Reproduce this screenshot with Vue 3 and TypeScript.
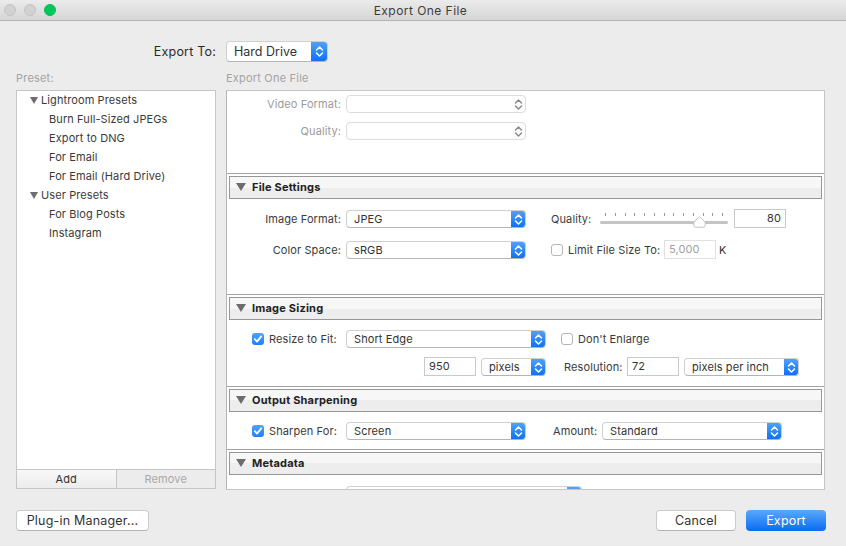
<script setup lang="ts">
const ticks: number[] = Array.from({ length: 13 }, (_, i) => i)
</script>

<template>
  <div class="window">
    <svg class="sprite" width="0" height="0" aria-hidden="true">
      <symbol id="chev" viewBox="0 0 9 13">
        <path d="M1.5 5 4.5 2 7.5 5M1.5 8 4.5 11 7.5 8" fill="none" stroke-width="1.5" stroke-linecap="round" stroke-linejoin="round" />
      </symbol>
      <symbol id="tick" viewBox="0 0 12 12">
        <path d="M2.8 6.2 5 8.6 9.2 3.4" fill="none" stroke="#fff" stroke-width="1.8" stroke-linecap="round" stroke-linejoin="round" />
      </symbol>
    </svg>

    <header class="titlebar">
      <div class="lights">
        <span class="light"></span>
        <span class="light"></span>
        <span class="light green"></span>
      </div>
      <span class="title">Export One File</span>
    </header>

    <main class="content">
      <div class="export-label">Export To:</div>
      <div class="sel big w102">
        <span class="val">Hard Drive</span>
        <span class="stepper"><svg><use href="#chev" /></svg></span>
      </div>

      <div class="caption">Preset:</div>
      <div class="caption">Export One File</div>

      <aside class="presets">
        <ul class="tree">
          <li class="group"><i class="tri small"></i>Lightroom Presets</li>
          <li>Burn Full-Sized JPEGs</li>
          <li>Export to DNG</li>
          <li>For Email</li>
          <li>For Email (Hard Drive)</li>
          <li class="group"><i class="tri small"></i>User Presets</li>
          <li>For Blog Posts</li>
          <li>Instagram</li>
        </ul>
        <div class="tree-actions">
          <div class="tree-btn">Add</div>
          <div class="tree-btn off">Remove</div>
        </div>
      </aside>

      <section class="panel">
        <div class="sec sec-video">
          <div class="row r-video">
            <label class="lab lab-main off">Video Format:</label>
            <div class="sel w180 disabled"><span class="val"></span><span class="stepper"><svg><use href="#chev" /></svg></span></div>
          </div>
          <div class="row r-video2">
            <label class="lab lab-main off">Quality:</label>
            <div class="sel w180 disabled"><span class="val"></span><span class="stepper"><svg><use href="#chev" /></svg></span></div>
          </div>
        </div>

        <div class="sec sec-file">
          <div class="sec-head"><i class="tri"></i>File Settings</div>
          <div class="row r-file1">
            <label class="lab lab-main">Image Format:</label>
            <div class="sel w180"><span class="val">JPEG</span><span class="stepper"><svg><use href="#chev" /></svg></span></div>
            <label class="lab lab-q">Quality:</label>
            <div class="slider">
              <div class="ticks"><span v-for="t in ticks" :key="t" class="mark"></span></div>
              <div class="track"></div>
              <svg class="thumb" viewBox="0 0 14 13"><path d="M7 .8 13.2 6.6V10a2.2 2.2 0 0 1-2.2 2.2H3A2.2 2.2 0 0 1 .8 10V6.6Z" fill="#fff" stroke="#bdbdbd" /></svg>
            </div>
            <div class="input right">80</div>
          </div>
          <div class="row r-file2">
            <label class="lab lab-main">Color Space:</label>
            <div class="sel w180"><span class="val">sRGB</span><span class="stepper"><svg><use href="#chev" /></svg></span></div>
            <span class="check ml25"></span>
            <label class="lab lab-limit">Limit File Size To:</label>
            <div class="input ml5 muted">5,000</div>
            <span class="unit">K</span>
          </div>
        </div>

        <div class="sec sec-size">
          <div class="sec-head"><i class="tri"></i>Image Sizing</div>
          <div class="row r-size1">
            <span class="check on ml25"><svg><use href="#tick" /></svg></span>
            <label class="lab lab-fit">Resize to Fit:</label>
            <div class="sel w200"><span class="val">Short Edge</span><span class="stepper"><svg><use href="#chev" /></svg></span></div>
            <span class="check ml15"></span>
            <label class="lab lab-en">Don't Enlarge</label>
          </div>
          <div class="row r-size2">
            <div class="input first-input">950</div>
            <div class="sel w65 ml5"><span class="val">pixels</span><span class="stepper"><svg><use href="#chev" /></svg></span></div>
            <label class="lab lab-res">Resolution:</label>
            <div class="input ml5">72</div>
            <div class="sel w115 ml5"><span class="val">pixels per inch</span><span class="stepper"><svg><use href="#chev" /></svg></span></div>
          </div>
        </div>

        <div class="sec sec-sharp">
          <div class="sec-head"><i class="tri"></i>Output Sharpening</div>
          <div class="row r-sharp">
            <span class="check on ml25"><svg><use href="#tick" /></svg></span>
            <label class="lab lab-fit">Sharpen For:</label>
            <div class="sel w180"><span class="val">Screen</span><span class="stepper"><svg><use href="#chev" /></svg></span></div>
            <label class="lab lab-amt">Amount:</label>
            <div class="sel w180 ml5"><span class="val">Standard</span><span class="stepper"><svg><use href="#chev" /></svg></span></div>
          </div>
        </div>

        <div class="sec sec-meta">
          <div class="sec-head"><i class="tri"></i>Metadata</div>
          <div class="row r-meta">
            <div class="sel w236 faded"><span class="val"></span><span class="stepper"></span></div>
          </div>
        </div>
      </section>
    </main>

    <footer class="footer">
      <div class="btn plugin">Plug-in Manager...</div>
      <div class="spacer"></div>
      <div class="btn cancel">Cancel</div>
      <div class="btn primary">Export</div>
    </footer>
  </div>
</template>

<style scoped>
.window {
  width: 846px;
  height: 546px;
  overflow: hidden;
  background: #ececec;
  color: #333;
  font-family: "Inter", "Liberation Sans", sans-serif;
  font-size: 11px;
  letter-spacing: 0.1px;
  display: flex;
  flex-direction: column;
}
.sprite { display: block; width: 0; height: 0; }
.titlebar {
  height: 20px;
  flex: none;
  box-sizing: content-box;
  border-bottom: 1px solid #b4b4b4;
  background: linear-gradient(#ebebeb, #d6d6d6);
  display: flex;
  align-items: center;
  justify-content: center;
  padding-right: 5px;
  position: relative;
}
.title { font-size: 12px; color: #3c3c3c; letter-spacing: 0.45px; }
.lights {
  position: absolute;
  left: 4px;
  top: 4px;
  display: flex;
  gap: 8px;
}
.light {
  width: 12px;
  height: 12px;
  border-radius: 50%;
  background: #d2d2d2;
  border: 1px solid #c4c4c4;
  box-sizing: border-box;
}
.light.green { background: #00c75a; border-color: #05bd56; }

.content {
  display: grid;
  grid-template-columns: 200px 599px;
  grid-template-rows: 21px 11px 418px;
  column-gap: 10px;
  margin: 20px 0 0 16px;
}
.export-label {
  font-size: 12.5px;
  letter-spacing: 0.2px;
  color: #2a2a2a;
  text-align: right;
  line-height: 21px;
}
.caption {
  color: #a3a3a3;
  line-height: 12px;
  margin-top: 10px;
  height: 12px;
  letter-spacing: 0.2px;
}
.presets, .panel { margin-top: 17px; }

.presets {
  height: 399px;
  box-sizing: border-box;
  border: 1px solid #c6c6c6;
  background: #fff;
  display: flex;
  flex-direction: column;
}
.tree {
  flex: 1;
  margin: 0;
  padding: 0;
  list-style: none;
}
.tree li {
  height: 19px;
  line-height: 19px;
  padding-left: 32px;
  color: #3a3a3a;
}
.tree li.group {
  padding-left: 13px;
  display: flex;
  align-items: center;
}
.tri {
  display: block;
  width: 0;
  height: 0;
  border-left: 5px solid transparent;
  border-right: 5px solid transparent;
  border-top: 8px solid #6d6d6d;
  flex: none;
}
.tri.small {
  border-left-width: 4.5px;
  border-right-width: 4.5px;
  border-top-width: 7px;
  margin-right: 3px;
}
.tree-actions {
  height: 18px;
  display: flex;
  border-top: 1px solid #c6c6c6;
  flex: none;
}
.tree-btn {
  flex: 1;
  text-align: center;
  line-height: 18px;
  color: #333;
  background: linear-gradient(#f8f8f8, #ececec);
}
.tree-btn:first-child { border-right: 1px solid #c6c6c6; }
.tree-btn.off { color: #a8a8a8; background: #ececec; }

.panel {
  height: 400px;
  box-sizing: border-box;
  border: 1px solid #c6c6c6;
  border-left-color: #b4b4b4;
  background: #fff;
  overflow: hidden;
}
.sec {
  box-sizing: border-box;
  border-bottom: 1px solid #a2a2a2;
  overflow: hidden;
}
.sec-video { height: 83px; }
.sec-file { height: 121px; }
.sec-size { height: 92px; }
.sec-sharp { height: 63px; }
.sec-meta { border-bottom: 0; height: 40px; }
.sec-head {
  height: 23px;
  box-sizing: border-box;
  margin: 2px 2px 0;
  border: 1px solid #979797;
  background: linear-gradient(#f7f7f7 0, #f7f7f7 50%, #ededed 50%, #ededed 100%);
  display: flex;
  align-items: center;
  font-weight: 700;
  color: #222;
  letter-spacing: 0.2px;
  padding: 0 0 2px 6px;
}
.sec-head .tri { margin-right: 6px; }

.row { display: flex; align-items: center; height: 18px; }
.r-video { margin-top: 4px; }
.r-video2 { margin-top: 9px; }
.r-file1 { margin-top: 11px; }
.r-file2 { margin-top: 13px; }
.r-size1 { margin-top: 10px; }
.r-size2 { margin-top: 10px; }
.r-sharp { margin-top: 10px; }
.r-meta { margin: 11px 0 0 119px; }

.lab { white-space: nowrap; color: #3a3a3a; display: block; }
.lab.off { color: #9b9b9b; }
.lab-main { width: 114px; text-align: right; margin-right: 5px; }
.lab-q { margin-left: 25px; width: 49px; }
.lab-limit { margin-left: 5px; width: 91px; }
.lab-fit { margin-left: 5px; width: 77px; }
.lab-en { margin-left: 5px; }
.lab-res { margin-left: 18px; width: 58px; }
.lab-amt { margin-left: 27px; width: 44px; }
.unit { margin-left: 3px; }

.sel {
  height: 18px;
  box-sizing: border-box;
  display: flex;
  background: #fff;
  border: 1px solid #cfcfcf;
  border-bottom-color: #b4b4b4;
  border-radius: 4px;
  overflow: hidden;
  flex: none;
}
.sel .val { flex: 1; padding-left: 7px; line-height: 16px; white-space: nowrap; color: #333; }
.stepper {
  width: 15px;
  margin: -1px -1px -1px 0;
  background: linear-gradient(#52a4fb, #0b6ff3);
  display: flex;
  align-items: center;
  justify-content: center;
  stroke: #fff;
  flex: none;
}
.stepper svg { width: 9px; height: 13px; display: block; }
.w102 { width: 102px; }
.w180 { width: 180px; }
.w200 { width: 200px; }
.w65 { width: 65px; }
.w115 { width: 115px; }
.w236 { width: 236px; }
.big { height: 21px; }
.big .val { font-size: 12.5px; line-height: 19px; letter-spacing: 0; }
.big .stepper { width: 17px; }
.disabled { border-color: #dcdcdc; }
.disabled .stepper { background: none; stroke: #8b8b8b; }
.faded .stepper { background: #4fa2fa; }

.slider { position: relative; width: 128px; height: 18px; flex: none; }
.ticks {
  position: absolute;
  left: 5px;
  right: 5px;
  top: 3px;
  display: flex;
  justify-content: space-between;
}
.mark { width: 1px; height: 3px; background: #9a9a9a; }
.track {
  position: absolute;
  left: 0;
  right: 0;
  top: 11px;
  height: 3px;
  border-radius: 2px;
  background: #c4c4c4;
}
.thumb {
  position: absolute;
  left: 93px;
  top: 6px;
  width: 13px;
  height: 12px;
}

.input {
  width: 52px;
  height: 19px;
  box-sizing: border-box;
  border: 1px solid #c9c9c9;
  background: #fff;
  line-height: 17px;
  padding: 0 4px;
  flex: none;
  color: #333;
  align-self: flex-start;
  margin-top: -1px;
}
.input.right { text-align: right; margin-left: 6px; }
.input.muted { color: #a0a0a0; border-color: #e0e0e0; }
.first-input { margin-left: 197px; }

.check {
  width: 12px;
  height: 12px;
  box-sizing: border-box;
  border: 1px solid #b5b5b5;
  border-radius: 3px;
  background: #fff;
  flex: none;
}
.check.on {
  border: 0;
  background: linear-gradient(#4fa3fb, #1f80f6);
}
.check svg { width: 12px; height: 12px; display: block; }
.ml5 { margin-left: 5px; }
.ml15 { margin-left: 15px; }
.ml25 { margin-left: 25px; }

.footer {
  display: flex;
  align-items: center;
  margin: 19px 20px 0 16px;
  gap: 10px;
}
.spacer { flex: 1; }
.btn {
  height: 21px;
  box-sizing: border-box;
  border-radius: 4px;
  text-align: center;
  font-size: 12.5px;
  letter-spacing: 0.2px;
  line-height: 19px;
  background: #fff;
  border: 1px solid #cbcbcb;
  border-bottom-color: #b2b2b2;
  color: #333;
}
.plugin { width: 133px; }
.cancel { width: 80px; }
.primary {
  width: 80px;
  border: 0;
  line-height: 21px;
  color: #fff;
  background: linear-gradient(#5aa9fb, #0a6cf3);
}
</style>
